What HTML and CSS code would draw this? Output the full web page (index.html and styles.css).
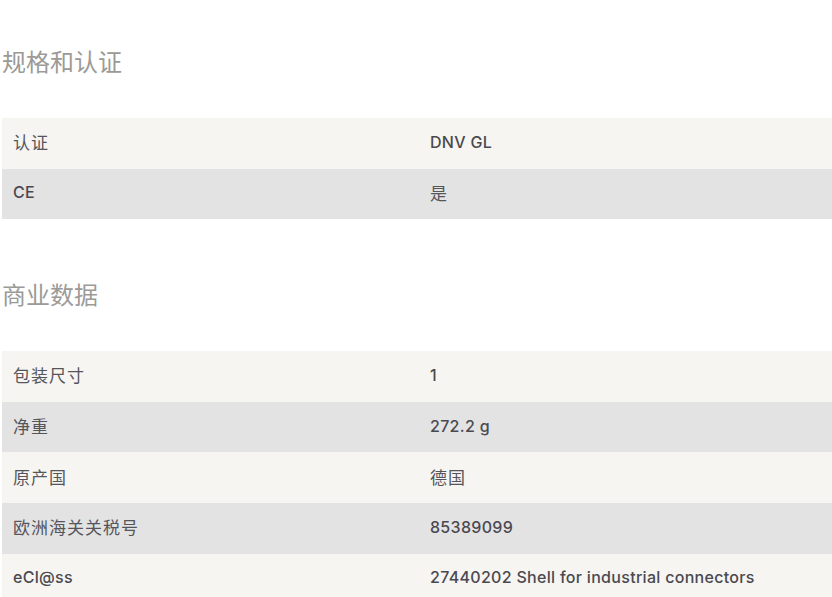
FILE: index.html
```html
<!DOCTYPE html>
<html lang="zh">
<head>
<meta charset="utf-8">
<title>规格和认证</title>
<link rel="stylesheet" href="styles.css">
</head>
<body>
<div class="page">
  <section class="spec">
    <h2 class="spec-title">规格和认证</h2>
    <table class="spec-table">
      <tr class="row-light"><td class="label zh">认证</td><td class="value">DNV GL</td></tr>
      <tr class="row-dark"><td class="label">CE</td><td class="value zh">是</td></tr>
    </table>
  </section>
  <section class="spec">
    <h2 class="spec-title">商业数据</h2>
    <table class="spec-table">
      <tr class="row-light"><td class="label zh">包装尺寸</td><td class="value">1</td></tr>
      <tr class="row-dark"><td class="label zh">净重</td><td class="value">272.2 g</td></tr>
      <tr class="row-light"><td class="label zh">原产国</td><td class="value zh">德国</td></tr>
      <tr class="row-dark"><td class="label zh">欧洲海关关税号</td><td class="value">85389099</td></tr>
      <tr class="row-light"><td class="label">eCl@ss</td><td class="value">27440202 Shell for industrial connectors</td></tr>
    </table>
  </section>
</div>
</body>
</html>
```

FILE: styles.css
```css
html, body {
  margin: 0;
  padding: 0;
  background: #ffffff;
}
.page {
  padding: 0 0 0 2px;
  font-family: "Inter", "Noto Sans CJK SC", sans-serif;
  color: #4a4950;
}
.spec-title {
  margin: 46px 0 43px;
  font-family: "Noto Sans CJK SC", sans-serif;
  font-size: 24px;
  line-height: 29px;
  font-weight: 400;
  color: #9b9a96;
}
.spec + .spec .spec-title {
  margin-top: 60px;
}
.spec-table {
  width: 100%;
  border-collapse: collapse;
}
.spec-table td {
  height: 50.6px;
  padding: 0 11px 3px;
  box-sizing: border-box;
  font-size: 16px;
  font-weight: 550;
  letter-spacing: 0.3px;
  vertical-align: middle;
}
.spec-table .label {
  width: 417px;
}
.spec-table .zh {
  font-family: "Noto Sans CJK SC", sans-serif;
  font-size: 17px;
  font-weight: 400;
  letter-spacing: 1px;
  color: #55555c;
}
.row-light td {
  background: #f6f5f1;
}
.row-dark td {
  background: #e3e3e3;
}
```
